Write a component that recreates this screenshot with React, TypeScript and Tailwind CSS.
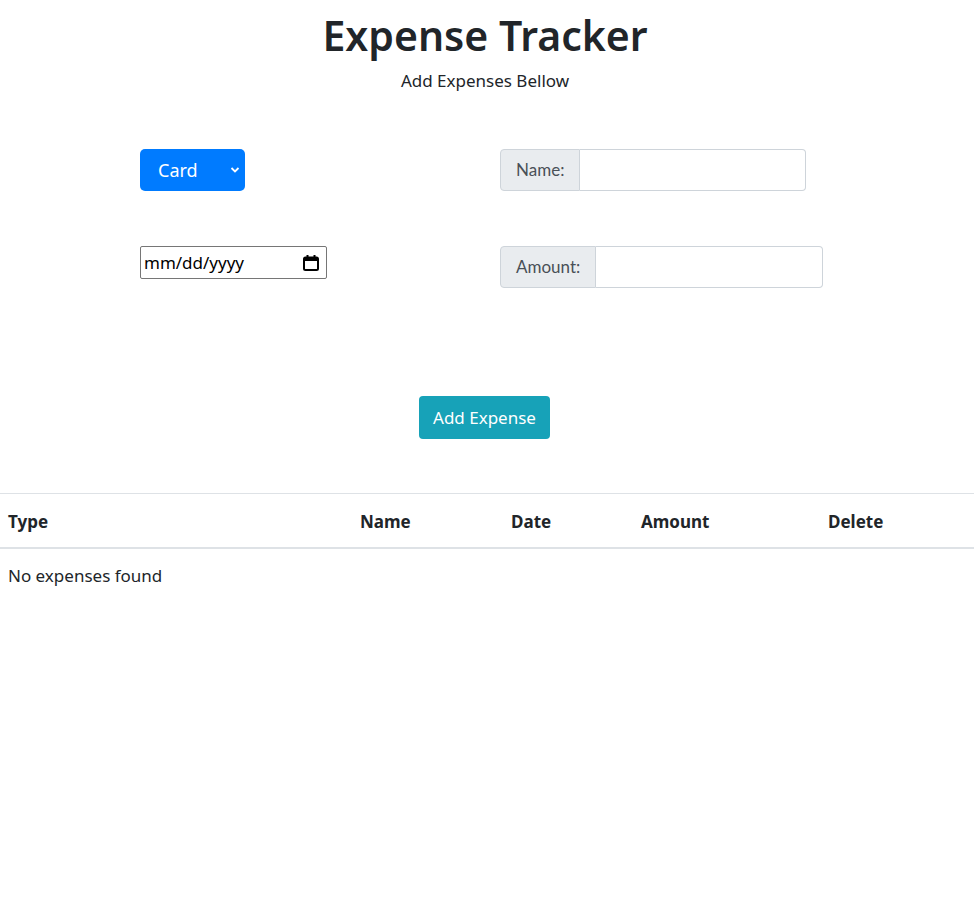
import React from "react";

const font = "font-['Segoe_UI','Noto_Sans','Liberation_Sans',sans-serif]";

export default function App() {
  return (
    <div className={`min-h-[924px] w-[974px] bg-white text-[#212529] ${font}`}>
      <div className="flex flex-col items-center pt-[8px] pr-[4px]">
        <h1 className="text-[41px] leading-[54px] font-semibold">Expense Tracker</h1>
        <p className="text-[17px] leading-[26px] mt-[6px]">Add Expenses Bellow</p>
      </div>

      <div className="pl-[140px] pt-[55px]">
        <div className="grid grid-cols-[360px_360px] gap-y-[55px]">
          <div className="h-[42px]">
            <div className="relative w-[105px] h-[42px] rounded-[5px] bg-[#007bff] text-white flex items-center">
              <span className="pl-[18px] text-[18px]">Card</span>
              <svg className="absolute right-[5px] top-[16px]" width="10" height="10" viewBox="0 0 10 10">
                <path d="M1.5 3 L5 6.5 L8.5 3" stroke="white" strokeWidth="1.8" fill="none" />
              </svg>
            </div>
          </div>
          <div className="flex h-[42px] w-[306px]">
            <div className="flex items-center px-[15px] bg-[#e9ecef] border border-[#ced4da] rounded-l-[4px] text-[#495057] text-[17px] font-['Lato',sans-serif]">
              Name:
            </div>
            <input className="flex-1 min-w-0 w-0 border border-[#ced4da] border-l-0 rounded-r-[4px] outline-none" />
          </div>
          <div>
            <div className="flex items-center justify-between w-[187px] h-[33px] border border-[#767676] rounded-[2px] pl-[3px] pr-[6px]">
              <span className="text-[17px] text-black">mm/dd/yyyy</span>
              <svg width="18" height="18" viewBox="0 0 18 18">
                <rect x="2" y="3.5" width="14" height="12.5" rx="1.5" fill="none" stroke="black" strokeWidth="2" />
                <rect x="2" y="3.5" width="14" height="3.5" fill="black" />
                <rect x="4.5" y="1" width="2" height="3" fill="black" />
                <rect x="11.5" y="1" width="2" height="3" fill="black" />
              </svg>
            </div>
          </div>
          <div className="flex h-[42px] w-[323px]">
            <div className="flex items-center px-[15px] bg-[#e9ecef] border border-[#ced4da] rounded-l-[4px] text-[#495057] text-[17px] font-['Lato',sans-serif]">
              Amount:
            </div>
            <input className="flex-1 min-w-0 w-0 border border-[#ced4da] border-l-0 rounded-r-[4px] outline-none" />
          </div>
        </div>
      </div>

      <div className="flex justify-center pt-[108px]">
        <button className="w-[131px] h-[43px] rounded-[4px] bg-[#17a2b8] text-white text-[17px] mr-[5px]">
          Add Expense
        </button>
      </div>

      <div className="mt-[54px] border-t border-[#dee2e6]">
        <div className="grid grid-cols-[352px_151px_130px_187px_1fr] h-[55px] items-center border-b-2 border-[#dee2e6] font-bold text-[17px]">
          <div className="pl-[8px] pt-[2px]">Type</div>
          <div className="pl-[8px] pt-[2px]">Name</div>
          <div className="pl-[8px] pt-[2px]">Date</div>
          <div className="pl-[8px] pt-[2px]">Amount</div>
          <div className="pl-[8px] pt-[2px]">Delete</div>
        </div>
        <div className="pl-[8px] pt-[14px] text-[17px]">No expenses found</div>
      </div>
    </div>
  );
}
